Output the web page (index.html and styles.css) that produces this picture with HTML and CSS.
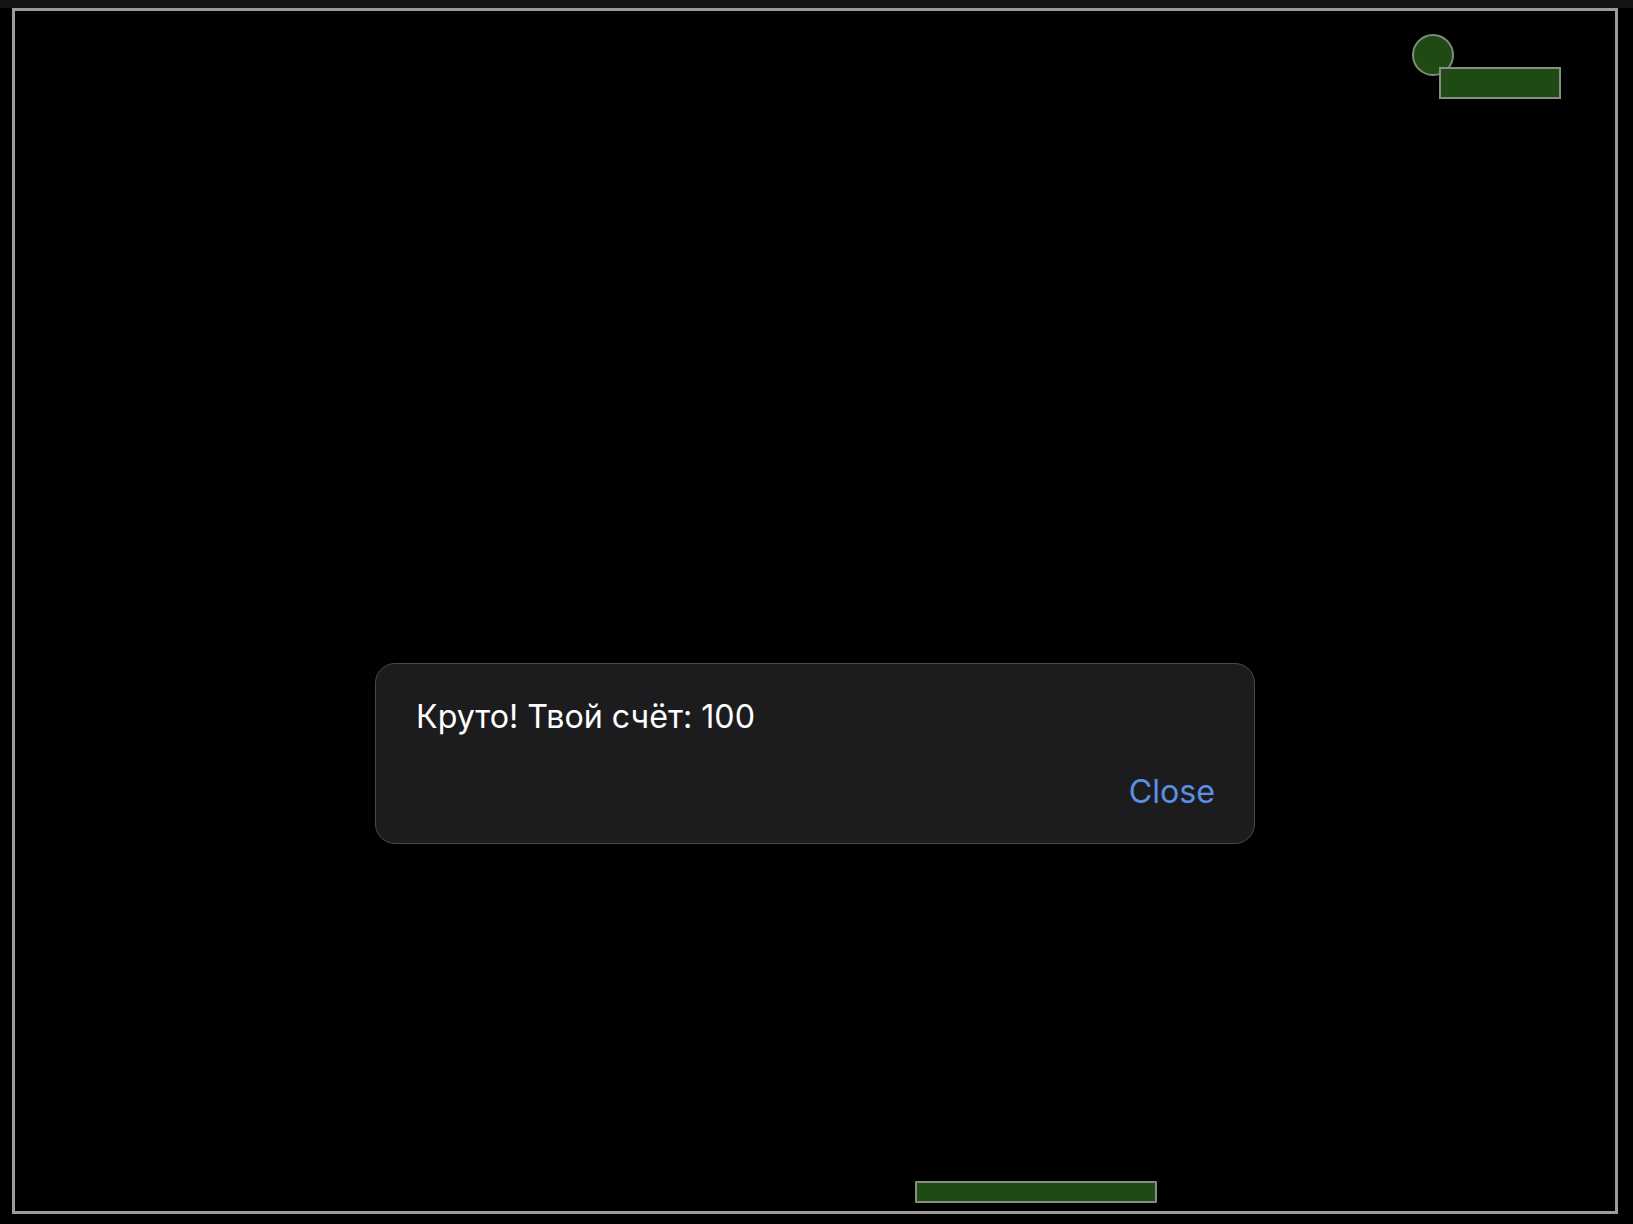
FILE: index.html
```html
<!DOCTYPE html>
<html lang="ru">
<head>
<meta charset="utf-8">
<title>Game</title>
<link rel="stylesheet" href="styles.css">
</head>
<body>
<div class="topbar"></div>
<div class="field">
  <div class="ball"></div>
  <div class="brick"></div>
  <div class="paddle"></div>
</div>
<div class="dialog">
  <p class="dialog-text">Круто! Твой счёт: 100</p>
  <div class="dialog-actions"><button class="dialog-btn">Close</button></div>
</div>
</body>
</html>
```
FILE: styles.css
```css
html, body {
  margin: 0;
  padding: 0;
  background: #000;
  width: 1633px;
  height: 1224px;
  overflow: hidden;
  font-family: Inter, "Noto Sans", "Liberation Sans", sans-serif;
}
.topbar {
  height: 8px;
  background: #141414;
}
.field {
  position: relative;
  box-sizing: border-box;
  margin-left: 12px;
  width: 1606px;
  height: 1206px;
  border: 3px solid #9b9b9b;
  background: #000;
}
.ball {
  position: absolute;
  left: 1397px;
  top: 23px;
  width: 38px;
  height: 38px;
  border-radius: 50%;
  background: #1f4a13;
  border: 2px solid #808a7d;
}
.brick {
  position: absolute;
  left: 1424px;
  top: 56px;
  width: 118px;
  height: 28px;
  background: #1f4a13;
  border: 2px solid #868d83;
}
.paddle {
  position: absolute;
  left: 900px;
  top: 1170px;
  width: 238px;
  height: 18px;
  background: #1f4a13;
  border: 2px solid #868d83;
  border-radius: 1px;
}
.dialog {
  position: absolute;
  left: 375px;
  top: 663px;
  box-sizing: border-box;
  width: 880px;
  height: 181px;
  background: #1c1c1e;
  border: 1px solid #4a4a4c;
  border-radius: 20px;
  padding: 34px 39px 0 40px;
  color: #fff;
}
.dialog-text {
  margin: 0;
  font-size: 32.2px;
  line-height: 38px;
  font-weight: 400;
}
.dialog-actions {
  display: flex;
  justify-content: flex-end;
  margin-top: 37px;
}
.dialog-btn {
  background: none;
  border: none;
  padding: 0;
  font-family: inherit;
  font-size: 32.2px;
  line-height: 38px;
  color: #5a8fe3;
}
```
